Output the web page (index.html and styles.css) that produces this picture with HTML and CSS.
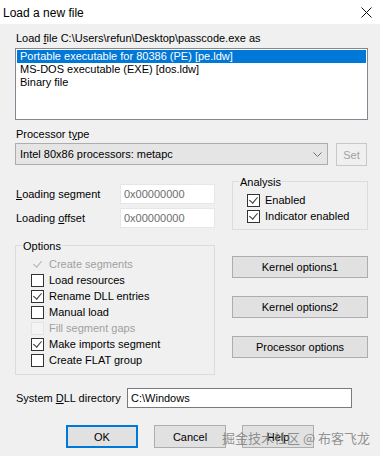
FILE: index.html
```html
<!DOCTYPE html>
<html lang="en">

<head>
  <meta charset="UTF-8">
  <meta name="viewport" content="width=device-width, initial-scale=1.0">
  <title>Load a new file</title>
  <link rel="stylesheet" href="styles.css">
</head>

<body>
  <div class="window">
    <div class="titlebar">
      <span class="title">Load a new file</span>
      <svg class="close" width="11" height="11" viewBox="0 0 11 11">
        <path d="M0.5 0.5L10.5 10.5M10.5 0.5L0.5 10.5" stroke="#111" stroke-width="1" fill="none" />
      </svg>
    </div>

    <div class="content">
      <div class="label file-label">Load <u>f</u>ile C:\Users\refun\Desktop\passcode.exe as</div>
      <div class="listbox">
        <div class="item selected">Portable executable for 80386 (PE) [pe.ldw]</div>
        <div class="item">MS-DOS executable (EXE) [dos.ldw]</div>
        <div class="item">Binary file</div>
      </div>

      <div class="label proc-label">Processor t<u>y</u>pe</div>
      <div class="proc-row">
        <div class="combo">
          <span>Intel 80x86 processors: metapc</span>
          <svg class="chevron" width="9" height="5" viewBox="0 0 9 5">
            <path d="M0.5 0.5L4.5 4.5L8.5 0.5" stroke="#707070" stroke-width="1" fill="none" />
          </svg>
        </div>
        <button class="btn set" disabled>Set</button>
      </div>

      <div class="middle">
        <div class="left-col">
          <div class="field-row first">
            <span class="field-label"><u>L</u>oading segment</span>
            <div class="textbox light">0x00000000</div>
          </div>
          <div class="field-row">
            <span class="field-label">Loading <u>o</u>ffset</span>
            <div class="textbox light">0x00000000</div>
          </div>

          <fieldset class="group options">
            <legend>Options</legend>
            <div class="check disabled"><span class="box on"></span>Create segments</div>
            <div class="check"><span class="box"></span>Load resources</div>
            <div class="check"><span class="box on"></span>Rename DLL entries</div>
            <div class="check"><span class="box"></span>Manual load</div>
            <div class="check disabled"><span class="box"></span>Fill segment gaps</div>
            <div class="check"><span class="box on"></span>Make imports segment</div>
            <div class="check"><span class="box"></span>Create FLAT group</div>
          </fieldset>
        </div>

        <div class="right-col">
          <fieldset class="group analysis">
            <legend>Analysis</legend>
            <div class="check"><span class="box on"></span>Enabled</div>
            <div class="check"><span class="box on"></span>Indicator enabled</div>
          </fieldset>
          <button class="btn side first">Kernel options1</button>
          <button class="btn side">Kernel options2</button>
          <button class="btn side">Processor options</button>
        </div>
      </div>

      <div class="dll-row">
        <span class="dll-label">System <u>D</u>LL directory</span>
        <div class="textbox dark">C:\Windows</div>
      </div>

      <div class="buttons">
        <button class="btn main default">OK</button>
        <button class="btn main">Cancel</button>
        <button class="btn main">Help</button>
      </div>
    </div>

    <div class="watermark">掘金技术社区 @ 布客飞龙</div>
  </div>
</body>

</html>
```

FILE: styles.css
```css
body {
  margin: 0;
  background: #f0f0f0;
  font-family: "Liberation Sans", Arial, sans-serif;
  font-size: 11px;
  color: #000;
}

.window {
  position: relative;
  width: 380px;
  height: 456px;
  overflow: hidden;
}

.titlebar {
  height: 24px;
  background: #fff;
  display: flex;
  align-items: center;
  justify-content: space-between;
  padding: 0 8px 0 3px;
}

.title {
  font-size: 12px;
  padding-top: 1px;
}

.close {
  display: block;
  margin-top: 1px;
}

.content {
  padding: 8px 12px 0 15px;
}

.label {
  line-height: 13px;
  padding-left: 1px;
}

u {
  text-underline-offset: 1px;
}

.listbox {
  margin-top: 3px;
  height: 70px;
  border: 1px solid #828790;
  background: #fff;
  padding: 1px;
  box-sizing: content-box;
  height: 68px;
}

.item {
  height: 13px;
  line-height: 13px;
  padding-left: 3px;
}

.item.selected {
  background: #0078d7;
  color: #fff;
}

.proc-label {
  margin-top: 8px;
}

.proc-row {
  display: flex;
  align-items: flex-start;
  gap: 8px;
  margin-top: 2px;
}

.combo {
  width: 313px;
  height: 22px;
  box-sizing: border-box;
  border: 1px solid #adadad;
  background: #e5e5e5;
  display: flex;
  align-items: center;
  justify-content: space-between;
  padding: 0 5px 0 4px;
}

.chevron {
  display: block;
  margin-right: 0;
}

.btn {
  font-family: "Liberation Sans", Arial, sans-serif;
  font-size: 11px;
  color: #000;
  background: #e1e1e1;
  border: 1px solid #adadad;
  padding: 0;
  box-sizing: border-box;
}

.btn.set {
  width: 31px;
  height: 23px;
  background: #f0f0f0;
  border-color: #c8c8c8;
  color: #a0a0a0;
}

.middle {
  display: flex;
  gap: 17px;
}

.left-col {
  width: 200px;
}

.right-col {
  width: 136px;
  display: flex;
  flex-direction: column;
}

.field-row {
  display: flex;
  align-items: center;
  height: 20px;
  margin-top: 4px;
}

.field-row.first {
  margin-top: 18px;
}

.field-label {
  width: 105px;
  padding-left: 1px;
  box-sizing: border-box;
}

.textbox {
  height: 20px;
  box-sizing: border-box;
  background: #fff;
  line-height: 18px;
  padding-left: 3px;
}

.textbox.light {
  width: 95px;
  border: 1px solid #e6e6e6;
  color: #6d6d6d;
}

.textbox.dark {
  width: 225px;
  border: 1px solid #7a7a7a;
}

.group {
  margin: 0;
  border: 1px solid #dcdcdc;
  min-width: 0;
}

.group legend {
  padding: 2px 1px 0 1px;
  line-height: 13px;
  margin-left: -9px;
}

.options {
  margin-top: 10px;
  width: 200px;
  box-sizing: border-box;
  padding: 3px 6px 6px 15px;
}

.analysis {
  margin-top: 8px;
  width: 136px;
  box-sizing: border-box;
  padding: 3px 6px 5px 14px;
}

.analysis legend {
  margin-left: -8px;
}

.check {
  display: flex;
  align-items: center;
  height: 16px;
  gap: 5px;
}

.box {
  width: 13px;
  height: 13px;
  box-sizing: border-box;
  border: 1px solid #333;
  background: #fff;
  position: relative;
}

.box.on::after {
  content: "";
  position: absolute;
  left: 3px;
  top: 0px;
  width: 4px;
  height: 7px;
  border-right: 1.4px solid #333;
  border-bottom: 1.4px solid #333;
  transform: rotate(40deg);
}

.check.disabled {
  color: #a0a0a0;
}

.check.disabled .box {
  border-color: #e4e4e4;
  background: #f4f4f4;
}

.check.disabled .box.on {
  border-color: #f0f0f0;
  background: transparent;
}

.check.disabled .box.on::after {
  border-color: #b0b0b0;
}

.btn.side {
  height: 22px;
  margin-top: 18px;
}

.btn.side.first {
  margin-top: 26px;
}

.dll-row {
  display: flex;
  align-items: center;
  margin-top: 13px;
}

.dll-label {
  width: 112px;
  padding-left: 1px;
  box-sizing: border-box;
}

.buttons {
  display: flex;
  gap: 16px;
  margin-top: 17px;
  padding-left: 51px;
}

.btn.main {
  width: 72px;
  height: 23px;
}

.btn.default {
  border: 2px solid #0078d7;
}

.watermark {
  position: absolute;
  left: 222px;
  top: 429px;
  font-family: "Noto Sans CJK SC", sans-serif;
  font-size: 13px;
  line-height: 18px;
  color: rgba(120, 120, 120, 0.8);
  white-space: nowrap;
}
```
